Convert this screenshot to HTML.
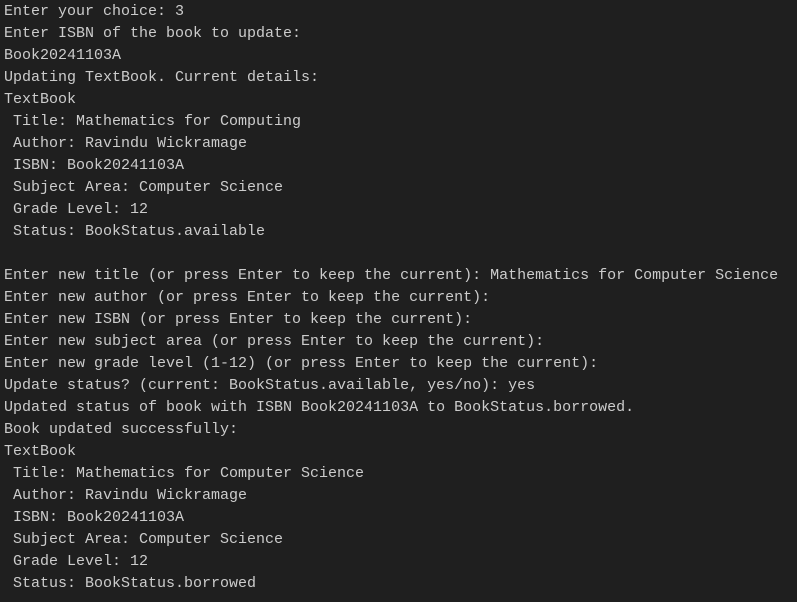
<!DOCTYPE html>
<html><head><style>
html,body{margin:0;padding:0;background:#1f1f1f;width:797px;height:602px;overflow:hidden}
pre{margin:0;padding:1px 0 0 4px;font-family:"Liberation Mono",monospace;font-size:15px;line-height:22px;color:#cccccc;white-space:pre}
</style></head><body><pre>Enter your choice: 3
Enter ISBN of the book to update:
Book20241103A
Updating TextBook. Current details:
TextBook
 Title: Mathematics for Computing
 Author: Ravindu Wickramage
 ISBN: Book20241103A
 Subject Area: Computer Science
 Grade Level: 12
 Status: BookStatus.available

Enter new title (or press Enter to keep the current): Mathematics for Computer Science
Enter new author (or press Enter to keep the current):
Enter new ISBN (or press Enter to keep the current):
Enter new subject area (or press Enter to keep the current):
Enter new grade level (1-12) (or press Enter to keep the current):
Update status? (current: BookStatus.available, yes/no): yes
Updated status of book with ISBN Book20241103A to BookStatus.borrowed.
Book updated successfully:
TextBook
 Title: Mathematics for Computer Science
 Author: Ravindu Wickramage
 ISBN: Book20241103A
 Subject Area: Computer Science
 Grade Level: 12
 Status: BookStatus.borrowed</pre></body></html>
